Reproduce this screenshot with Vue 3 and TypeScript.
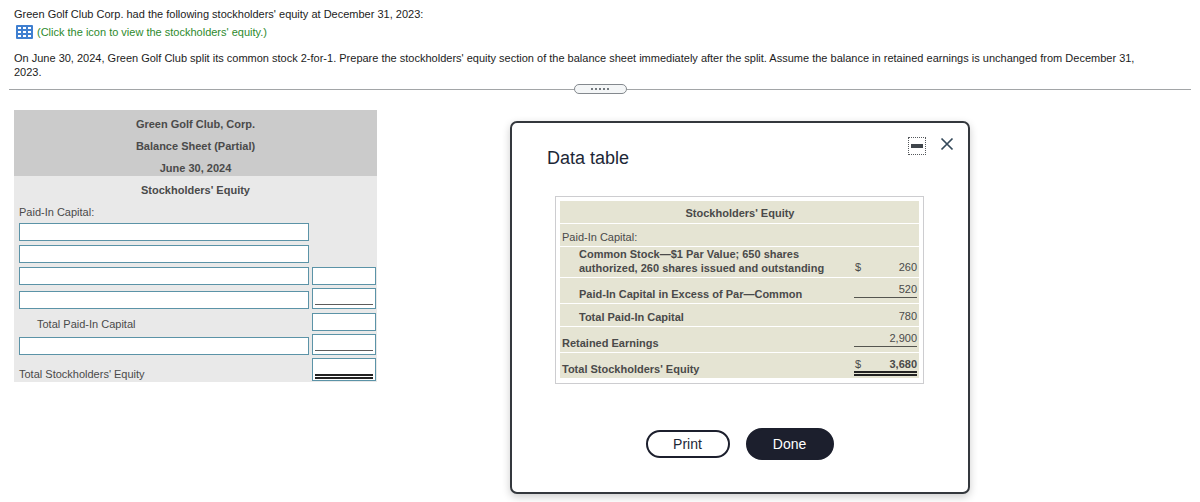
<script setup lang="ts">
import { reactive } from 'vue'

type Rule = 'none' | 'single' | 'double'

interface SheetRow {
  id: string
  label?: string
  indent?: boolean
  amount: boolean
  rule: Rule
}

interface DataRow {
  label: string
  bold?: boolean
  indent?: boolean
  currency?: boolean
  value?: string
  strong?: boolean
  rule: Rule
}

const sheetRows: SheetRow[] = [
  { id: 'r1', amount: false, rule: 'none' },
  { id: 'r2', amount: false, rule: 'none' },
  { id: 'r3', amount: true, rule: 'none' },
  { id: 'r4', amount: true, rule: 'single' },
  { id: 'r5', label: 'Total Paid-In Capital', indent: true, amount: true, rule: 'none' },
  { id: 'r6', amount: true, rule: 'single' },
  { id: 'r7', label: "Total Stockholders' Equity", amount: true, rule: 'double' },
]

const dataRows: DataRow[] = [
  { label: 'Paid-In Capital:', rule: 'none' },
  {
    label: 'Common Stock—$1 Par Value; 650 shares authorized, 260 shares issued and outstanding',
    bold: true, indent: true, currency: true, value: '260', rule: 'none',
  },
  { label: 'Paid-In Capital in Excess of Par—Common', bold: true, indent: true, value: '520', rule: 'single' },
  { label: 'Total Paid-In Capital', bold: true, indent: true, value: '780', rule: 'none' },
  { label: 'Retained Earnings', bold: true, value: '2,900', rule: 'single' },
  { label: "Total Stockholders' Equity", bold: true, currency: true, value: '3,680', strong: true, rule: 'double' },
]

const accounts = reactive<Record<string, string>>({})
const amounts = reactive<Record<string, string>>({})
</script>

<template>
  <main class="page">
    <section class="problem">
      <p>Green Golf Club Corp. had the following stockholders' equity at December 31, 2023:</p>
      <a class="view-link" href="#data-table">
        <svg width="17" height="14" viewBox="0 0 17 14" aria-hidden="true">
          <rect width="17" height="14" rx="1" fill="#3f7fd0" />
          <g fill="#fff">
            <rect x="2" y="2" width="3" height="2" /><rect x="7" y="2" width="3" height="2" /><rect x="12" y="2" width="3" height="2" />
            <rect x="2" y="6" width="3" height="2" /><rect x="7" y="6" width="3" height="2" /><rect x="12" y="6" width="3" height="2" />
            <rect x="2" y="10" width="3" height="2" /><rect x="7" y="10" width="3" height="2" /><rect x="12" y="10" width="3" height="2" />
          </g>
        </svg>
        <span>(Click the icon to view the stockholders' equity.)</span>
      </a>
      <p class="task">
        On June 30, 2024, Green Golf Club split its common stock 2-for-1. Prepare the stockholders' equity section of the
        balance sheet immediately after the split. Assume the balance in retained earnings is unchanged from December 31,
        2023.
      </p>
    </section>

    <div class="divider">
      <button class="handle" type="button" aria-label="Resize panels">
        <i v-for="n in 5" :key="n" class="dot"></i>
      </button>
    </div>

    <div class="work">
      <table class="sheet">
        <thead>
          <tr class="title"><th colspan="2">Green Golf Club, Corp.</th></tr>
          <tr class="title"><th colspan="2">Balance Sheet (Partial)</th></tr>
          <tr class="title"><th colspan="2">June 30, 2024</th></tr>
        </thead>
        <tbody>
          <tr><th colspan="2">Stockholders' Equity</th></tr>
          <tr><td colspan="2">Paid-In Capital:</td></tr>
          <tr v-for="row in sheetRows" :key="row.id" :class="row.rule">
            <td :class="{ indent: row.indent }">
              <template v-if="row.label">{{ row.label }}</template>
              <div v-else class="box"><input v-model="accounts[row.id]" type="text" aria-label="Account" /></div>
            </td>
            <td class="amount">
              <div v-if="row.amount" class="box" :class="row.rule">
                <input v-model="amounts[row.id]" type="text" :aria-label="row.label ?? 'Amount'" />
              </div>
            </td>
          </tr>
        </tbody>
      </table>

      <section id="data-table" class="dialog" role="dialog" aria-labelledby="dialog-title">
        <header class="dialog-head">
          <h2 id="dialog-title">Data table</h2>
          <div class="window-controls">
            <button class="minimize" type="button" aria-label="Minimize"><i></i></button>
            <button class="close" type="button" aria-label="Close">
              <svg width="14" height="14" viewBox="0 0 14 14" aria-hidden="true">
                <path d="M1.5 1.5 12.5 12.5M12.5 1.5 1.5 12.5" fill="none" stroke="#34495a" stroke-width="1.7" />
              </svg>
            </button>
          </div>
        </header>

        <div class="frame">
          <table class="data">
            <thead>
              <tr><th class="heading" colspan="2">Stockholders' Equity</th></tr>
            </thead>
            <tbody>
              <tr v-for="row in dataRows" :key="row.label" :class="row.rule">
                <td :class="{ bold: row.bold, indent: row.indent }">{{ row.label }}</td>
                <td class="figure" :class="row.rule">
                  <div v-if="row.value" class="money">
                    <span>{{ row.currency ? '$' : '' }}</span>
                    <span :class="{ bold: row.strong }">{{ row.value }}</span>
                  </div>
                </td>
              </tr>
            </tbody>
          </table>
        </div>

        <footer class="actions">
          <button class="print" type="button">Print</button>
          <button class="done" type="button">Done</button>
        </footer>
      </section>
    </div>
  </main>
</template>

<style>
body {
  margin: 0;
  background: #fff;
}
</style>

<style scoped>
.page {
  padding: 7px 9px 9px;
  font-family: "Liberation Sans", Arial, sans-serif;
  font-size: 11px;
  line-height: 14px;
  color: #1c1c1c;
}
.problem {
  padding: 0 5px;
}
p {
  margin: 0;
}
.view-link {
  display: flex;
  align-items: center;
  gap: 4px;
  margin-top: 4px;
  padding-left: 2px;
  color: #2d8a2d;
  text-decoration: none;
}
.task {
  margin-top: 12px;
  padding-right: 40px;
}
.divider {
  display: flex;
  align-items: center;
  margin-top: 5px;
}
.divider::before,
.divider::after {
  content: "";
  flex: 1;
  height: 1px;
  background: #a2a5a7;
}
.handle {
  display: flex;
  align-items: center;
  justify-content: center;
  gap: 2px;
  box-sizing: border-box;
  width: 53px;
  height: 10px;
  padding: 0;
  border: 1px solid #84898e;
  border-radius: 5px;
  background: #f4f6f7;
}
.dot {
  width: 2px;
  height: 2px;
  border-radius: 1px;
  background: #4a5057;
}
.work {
  display: flex;
  align-items: flex-start;
  padding: 16px 5px 0;
}
table {
  border-spacing: 0;
  color: #4a4a4a;
}
th,
td {
  vertical-align: bottom;
  text-align: left;
}
th {
  text-align: center;
}

.sheet {
  flex: 0 0 363px;
  background: #e9e9e9;
}
.sheet tr {
  height: 22px;
}
.sheet tr.single {
  height: 24px;
}
.sheet tr.double {
  height: 26px;
}
.sheet th,
.sheet td {
  padding: 0 0 1px 5px;
}
.sheet th {
  padding: 0 0 1px;
}
.sheet .title th {
  background: #cbcbcb;
}
.sheet .indent {
  padding-left: 23px;
}
.sheet .amount {
  width: 64px;
  padding: 0 1px 1px 3px;
}
.box {
  box-sizing: border-box;
  height: 18px;
  border: 1px solid #5b93a7;
  background: #fff;
  padding: 0 3px;
}
.box input {
  display: block;
  box-sizing: border-box;
  width: 100%;
  height: 16px;
  padding: 0;
  border: 0;
  outline: 0;
  background: none;
  font: inherit;
  color: inherit;
}
.box.single,
.box.double {
  height: 21px;
  padding: 0 2px;
}
.box.single input {
  border-bottom: 1px solid #5c5c5c;
}
.box.double {
  height: 23px;
}
.box.double input {
  height: 20px;
  border-bottom: 5px double #222;
}

.dialog {
  box-sizing: border-box;
  flex: 0 0 460px;
  margin: 11px 0 0 133px;
  padding: 14px 44px 32px 43px;
  border: 2px solid #34383d;
  border-radius: 7px;
  background: #fff;
  box-shadow: 0 3px 8px rgba(0, 0, 0, 0.2);
}
.dialog-head {
  display: flex;
  justify-content: space-between;
  margin: 0 -31px 0 -8px;
}
h2 {
  margin: 10px 0 0;
  font-size: 18px;
  font-weight: 400;
  line-height: 22px;
  color: #1c2736;
}
.window-controls {
  display: flex;
  gap: 14px;
  align-items: flex-start;
  margin-right: 1px;
}
.window-controls button {
  display: flex;
  align-items: center;
  justify-content: center;
  padding: 0;
  background: none;
}
.minimize {
  width: 18px;
  height: 18px;
  border: 1px dotted #55585c;
}
.minimize i {
  width: 12px;
  height: 4px;
  background: #3f454b;
}
.close {
  border: 0;
}
.frame {
  margin-top: 27px;
  padding: 3px 4px 4px;
  border: 1px solid #cdcdd0;
}
.data {
  width: 100%;
  border-spacing: 0 1px;
}
.data th,
.data td {
  height: 20px;
  padding: 0 1px 2px 2px;
  background: #e5e4d3;
}
.data .heading {
  height: 19px;
  padding-bottom: 3px;
}
.data .single td,
.data .double td {
  height: 23px;
}
.data .indent {
  padding-left: 19px;
}
.bold {
  font-weight: 700;
}
.data .figure {
  width: 63px;
  height: 19px;
  padding: 0 2px 3px 4px;
}
.data .figure.single {
  height: 20px;
  padding-bottom: 5px;
}
.data .figure.double {
  height: 23px;
  padding-bottom: 2px;
}
.money {
  display: flex;
  justify-content: space-between;
  padding-left: 1px;
}
.single .money {
  padding-bottom: 1px;
  border-bottom: 1px solid #55554f;
}
.double .money {
  border-bottom: 5px double #222;
}
.actions {
  display: flex;
  align-items: center;
  justify-content: center;
  gap: 16px;
  margin-top: 44px;
}
.actions button {
  box-sizing: border-box;
  border: 2px solid #1c1f2d;
  border-radius: 16px;
  padding: 0;
  font: inherit;
  font-size: 14px;
}
.print {
  width: 84px;
  height: 28px;
  background: #fff;
  color: #1c2736;
}
.done {
  width: 88px;
  height: 32px;
  background: #1c1f2d;
  color: #fff;
}
</style>
